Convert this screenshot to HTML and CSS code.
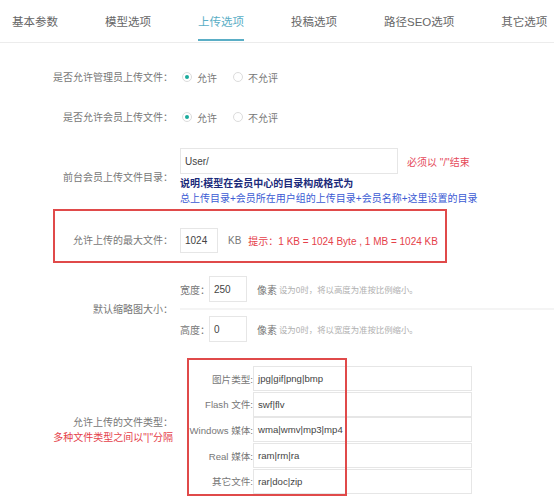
FILE: index.html
```html
<!DOCTYPE html>
<html lang="zh-CN">
<head>
<meta charset="utf-8">
<title>上传选项</title>
<link rel="stylesheet" href="styles.css">
</head>
<body>
<div class="tabs">
  <div class="tab">基本参数</div>
  <div class="tab">模型选项</div>
  <div class="tab active">上传选项</div>
  <div class="tab">投稿选项</div>
  <div class="tab">路径SEO选项</div>
  <div class="tab">其它选项</div>
</div>

<div class="form">
  <div class="row row-radio first">
    <div class="label">是否允许管理员上传文件：</div>
    <div class="field radios">
      <span class="radio checked"></span><span class="rtext">允许</span>
      <span class="radio"></span><span class="rtext">不允评</span>
    </div>
  </div>

  <div class="row row-radio">
    <div class="label">是否允许会员上传文件：</div>
    <div class="field radios">
      <span class="radio checked"></span><span class="rtext">允许</span>
      <span class="radio"></span><span class="rtext">不允评</span>
    </div>
  </div>

  <div class="row row-dir">
    <div class="label">前台会员上传文件目录：</div>
    <div class="field">
      <div class="inline">
        <div class="input input-dir">User/</div>
        <span class="red-note">必须以 "/"结束</span>
      </div>
      <div class="explain">说明:模型在会员中心的目录构成格式为</div>
      <div class="explain-blue">总上传目录+会员所在用户组的上传目录+会员名称+这里设置的目录</div>
    </div>
  </div>

  <div class="row row-max">
    <div class="mark mark-max"></div>
    <div class="label">允许上传的最大文件：</div>
    <div class="field inline">
      <div class="input input-small">1024</div>
      <span class="unit">KB</span>
      <span class="red-tip">提示：1 KB = 1024 Byte , 1 MB = 1024 KB</span>
    </div>
  </div>

  <div class="row row-thumb">
    <div class="label">默认缩略图大小：</div>
    <div class="field thumb">
      <div class="sub">
        <span class="sublabel">宽度：</span>
        <div class="input input-num">250</div>
        <span class="px">像素</span>
        <span class="hint">设为0时，将以高度为准按比例缩小。</span>
      </div>
      <div class="sub">
        <span class="sublabel">高度：</span>
        <div class="input input-num">0</div>
        <span class="px">像素</span>
        <span class="hint">设为0时，将以宽度为准按比例缩小。</span>
      </div>
    </div>
  </div>

  <div class="row row-types">
    <div class="mark mark-types"></div>
    <div class="label">允许上传的文件类型：<br><span class="red-sub">多种文件类型之间以"|"分隔</span></div>
    <div class="field">
      <div class="types">
        <div class="tlabel">图片类型:</div><div class="input tinput">jpg|gif|png|bmp</div>
        <div class="tlabel">Flash 文件:</div><div class="input tinput">swf|flv</div>
        <div class="tlabel">Windows 媒体:</div><div class="input tinput">wma|wmv|mp3|mp4</div>
        <div class="tlabel">Real 媒体:</div><div class="input tinput">ram|rm|ra</div>
        <div class="tlabel">其它文件:</div><div class="input tinput">rar|doc|zip</div>
      </div>
    </div>
  </div>
</div>
</body>
</html>
```

FILE: styles.css
```css
* { box-sizing: border-box; }
html, body { margin: 0; padding: 0; background: #fff; }
body {
  font-family: "Liberation Sans", "Noto Sans CJK SC", sans-serif;
  font-size: 10px;
  color: #777;
  width: 554px;
  height: 501px;
  overflow: hidden;
}

.tabs {
  display: flex;
  gap: 47px;
  padding-left: 12px;
  height: 43px;
  border-bottom: 1px solid #ececec;
  white-space: nowrap;
}
.tab {
  font-size: 11.5px;
  color: #666;
  height: 41px;
  line-height: 44px;
  border-bottom: 2px solid transparent;
}
.tab.active {
  color: #5aaec6;
  border-bottom-color: #5aaec6;
}

.form { position: relative; }

.row {
  display: flex;
  align-items: center;
  position: relative;
}
.label {
  width: 173px;
  flex-shrink: 0;
  text-align: right;
  color: #777;
  line-height: 15px;
  white-space: nowrap;
}
.field { padding-left: 7px; }

.row-radio { height: 40px; }
.row-radio.first { margin-top: 14px; }

.radios { display: flex; align-items: center; }
.radio {
  width: 10px;
  height: 10px;
  border: 1px solid #dcdcdc;
  border-radius: 50%;
  position: relative;
  margin-left: 2px;
  margin-right: 5px;
}
.radio.checked::after {
  content: "";
  position: absolute;
  left: 2px;
  top: 2px;
  width: 4px;
  height: 4px;
  border-radius: 50%;
  background: #1aab9c;
}
.rtext { color: #777; margin-right: 14px; }

.input {
  border: 1px solid #e6e6e6;
  background: #fff;
  color: #444;
  padding-left: 4px;
  display: flex;
  align-items: center;
  white-space: nowrap;
}
.inline { display: flex; align-items: center; }

.row-dir { margin-top: 11px; }
.input-dir { width: 218px; height: 26px; }
.red-note { color: #e5495a; margin-left: 9px; }
.explain {
  color: #1b2a7a;
  font-weight: bold;
  line-height: 15px;
  margin-top: 2px;
}
.explain-blue { color: #3b5bd4; line-height: 15px; white-space: nowrap; }

.row-max { margin-top: 3px; padding: 19px 0 10px; }
.mark {
  position: absolute;
  border: 2px solid #e04a4a;
  pointer-events: none;
}
.mark-max { left: 53px; top: 0; width: 394px; height: 54px; }
.input-small { width: 38px; height: 25px; }
.unit { color: #777; margin-left: 10px; }
.red-tip { color: #e5414a; margin-left: 7px; }

.row-thumb { margin-top: 7px; }
.thumb { flex: 1; }
.sub {
  display: flex;
  align-items: center;
  padding: 6px 0;
  white-space: nowrap;
}
.sub + .sub { border-top: 2px solid #f4f4f4; }
.sublabel { color: #777; flex-shrink: 0; margin-right: -1px; }
.input-num { width: 38px; height: 26px; flex-shrink: 0; }
.px { color: #777; margin-left: 10px; }
.hint { color: #b0b0b0; font-size: 8.4px; margin-left: 2px; }

.row-types { margin-top: 18px; }
.red-sub { color: #e5414a; }
.mark-types { left: 187px; top: -8px; width: 160px; height: 138px; }
.types {
  display: grid;
  grid-template-columns: 73px 219px;
  grid-auto-rows: 25.6px;
  align-items: center;
}
.tlabel { text-align: right; color: #777; white-space: nowrap; font-size: 9.6px; }
.tinput { height: 25px; font-size: 9.6px; }
```
